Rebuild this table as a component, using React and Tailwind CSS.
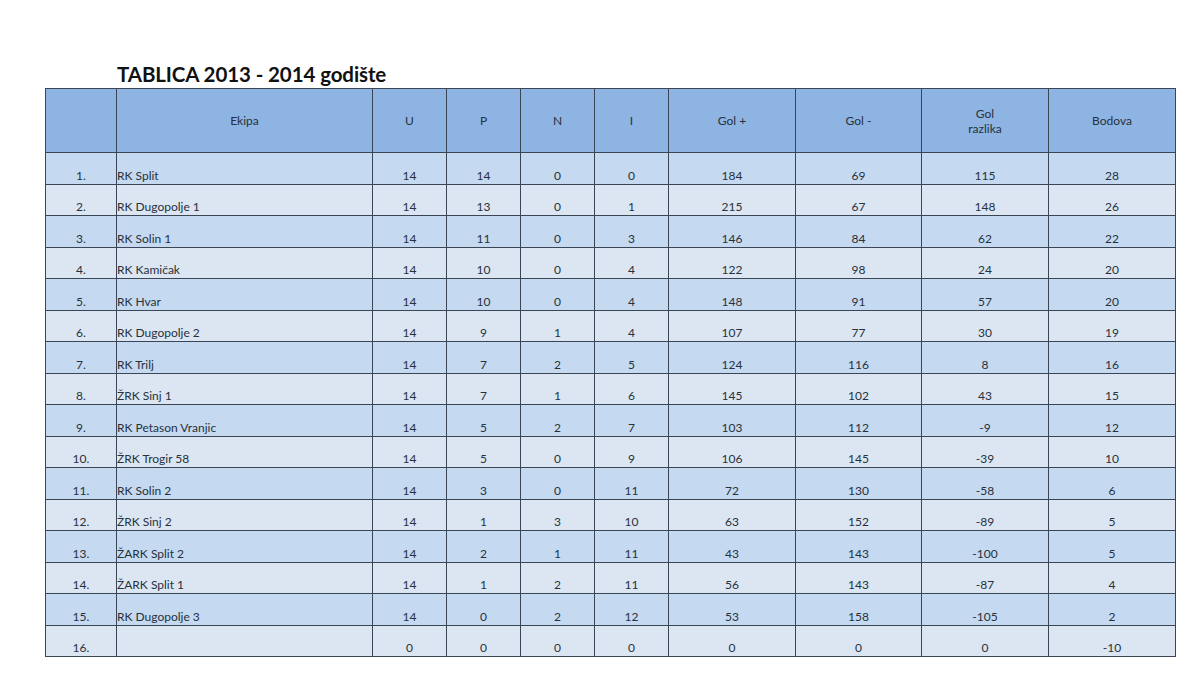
import React from "react";

const rows = [
  ["1.", "RK Split", 14, 14, 0, 0, 184, 69, 115, 28],
  ["2.", "RK Dugopolje 1", 14, 13, 0, 1, 215, 67, 148, 26],
  ["3.", "RK Solin 1", 14, 11, 0, 3, 146, 84, 62, 22],
  ["4.", "RK Kamičak", 14, 10, 0, 4, 122, 98, 24, 20],
  ["5.", "RK Hvar", 14, 10, 0, 4, 148, 91, 57, 20],
  ["6.", "RK Dugopolje 2", 14, 9, 1, 4, 107, 77, 30, 19],
  ["7.", "RK Trilj", 14, 7, 2, 5, 124, 116, 8, 16],
  ["8.", "ŽRK Sinj 1", 14, 7, 1, 6, 145, 102, 43, 15],
  ["9.", "RK Petason Vranjic", 14, 5, 2, 7, 103, 112, -9, 12],
  ["10.", "ŽRK Trogir 58", 14, 5, 0, 9, 106, 145, -39, 10],
  ["11.", "RK Solin 2", 14, 3, 0, 11, 72, 130, -58, 6],
  ["12.", "ŽRK Sinj 2", 14, 1, 3, 10, 63, 152, -89, 5],
  ["13.", "ŽARK Split 2", 14, 2, 1, 11, 43, 143, -100, 5],
  ["14.", "ŽARK Split 1", 14, 1, 2, 11, 56, 143, -87, 4],
  ["15.", "RK Dugopolje 3", 14, 0, 2, 12, 53, 158, -105, 2],
  ["16.", "", 0, 0, 0, 0, 0, 0, 0, -10],
];

const widths = ["w-[71px]", "w-[256px]", "w-[74px]", "w-[74px]", "w-[74px]", "w-[74px]", "w-[127px]", "w-[126px]", "w-[127px]", "w-[127px]"];

export default function App() {
  return (
    <div
      className="w-[1200px] h-[675px] bg-white text-[#27313c]"
      style={{ fontFamily: "Lato, 'Open Sans', sans-serif" }}
    >
      <div className="pt-[61px] pl-[45px]">
        <h1 className="ml-[72px] text-[20.5px] leading-[27px] font-bold text-[#111] tracking-[-0.1px]">
          TABLICA 2013 - 2014 godište
        </h1>
        <table className="table-fixed border-collapse w-[1130px] text-[12px]">
          <colgroup>
            {widths.map((w, i) => (
              <col key={i} className={w} />
            ))}
          </colgroup>
          <thead>
            <tr className="h-[64px] bg-[#8eb4e3]">
              <th className="border border-[#3a4656] font-normal"></th>
              <th className="border border-[#3a4656] font-normal">Ekipa</th>
              <th className="border border-[#3a4656] font-normal">U</th>
              <th className="border border-[#3a4656] font-normal">P</th>
              <th className="border border-[#3a4656] font-normal">N</th>
              <th className="border border-[#3a4656] font-normal">I</th>
              <th className="border border-[#3a4656] font-normal">Gol +</th>
              <th className="border border-[#3a4656] font-normal">Gol -</th>
              <th className="border border-[#3a4656] font-normal leading-[15px]">
                Gol
                <br />
                razlika
              </th>
              <th className="border border-[#3a4656] font-normal">Bodova</th>
            </tr>
          </thead>
          <tbody>
            {rows.map((r, i) => (
              <tr key={i} className={`h-[31.5px] ${i % 2 === 0 ? "bg-[#c5d9f1]" : "bg-[#dce6f2]"}`}>
                {r.map((c, j) => (
                  <td
                    key={j}
                    className={`border border-[#3a4656] align-bottom pb-[1px] leading-[15px] ${
                      j === 1 ? "text-left pl-0" : "text-center"
                    }`}
                  >
                    {c}
                  </td>
                ))}
              </tr>
            ))}
          </tbody>
        </table>
      </div>
    </div>
  );
}
